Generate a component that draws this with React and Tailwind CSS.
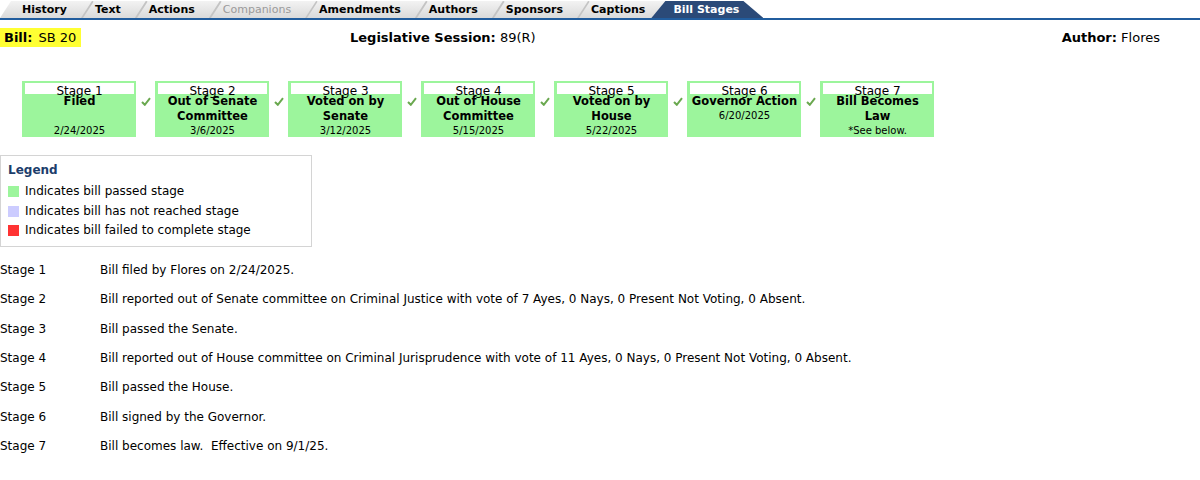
const tabs = [
    { label: "History" },
    { label: "Text" },
    { label: "Actions" },
    { label: "Companions", disabled: true },
    { label: "Amendments" },
    { label: "Authors" },
    { label: "Sponsors" },
    { label: "Captions" },
];

const stages = [
    { n: 1, title: ["Filed", "\u00a0"], date: "2/24/2025" },
    { n: 2, title: ["Out of Senate", "Committee"], date: "3/6/2025" },
    { n: 3, title: ["Voted on by", "Senate"], date: "3/12/2025" },
    { n: 4, title: ["Out of House", "Committee"], date: "5/15/2025" },
    { n: 5, title: ["Voted on by", "House"], date: "5/22/2025" },
    { n: 6, title: ["Governor Action"], date: "6/20/2025" },
    { n: 7, title: ["Bill Becomes", "Law"], date: "*See below." },
];

const details = [
    "Bill filed by Flores on 2/24/2025.",
    "Bill reported out of Senate committee on Criminal Justice with vote of 7 Ayes, 0 Nays, 0 Present Not Voting, 0 Absent.",
    "Bill passed the Senate.",
    "Bill reported out of House committee on Criminal Jurisprudence with vote of 11 Ayes, 0 Nays, 0 Present Not Voting, 0 Absent.",
    "Bill passed the House.",
    "Bill signed by the Governor.",
    "Bill becomes law.\u00a0\u00a0Effective on 9/1/25.",
];

function Check() {
    return (
        <svg width="10" height="9" viewBox="0 0 10 9" className="self-start mt-[16px] mx-auto">
            <path d="M1 5 L3.8 7.8 L9 1.2" fill="none" stroke="#6aa84f" strokeWidth="2" />
        </svg>
    );
}

function StageBox({ stage }) {
    return (
        <div className="w-[114px] h-[56px] shrink-0 bg-[#9cf59c] pt-[2px] pl-[3px] pr-[2px] text-center text-black">
            <div className="h-[11px] bg-white text-[12px] leading-[16px]">Stage {stage.n}</div>
            <div className="relative text-[11.5px] font-bold leading-[15px] whitespace-nowrap">
                {stage.title.map((t, i) => (
                    <div key={i}>{t}</div>
                ))}
            </div>
            <div className="text-[10px] leading-[13px]">{stage.date}</div>
        </div>
    );
}

export default function App() {
    return (
        <div className="w-[1200px] h-[480px] bg-white text-black font-['Verdana','DejaVu_Sans',sans-serif] overflow-hidden">
            {/* tab strip */}
            <div className="flex h-[20px] pt-[1px] border-b-2 border-[#215d9e]">
                {tabs.map((t, i) => (
                    <div
                        key={t.label}
                        className={
                            "relative h-[17px] pr-[25px] text-[11px] leading-[17px] bg-linear-to-b from-[#f3f3f3] to-[#dadada] [clip-path:polygon(11px_0,100%_0,100%_100%,0_100%)] " +
                            (i === 0 ? "pl-[22px] " : "pl-[14px] -ml-[11px] ") +
                            (t.disabled ? "text-[#9a9a9a]" : "font-bold text-black")
                        }
                    >
                        {i > 0 && (
                            <svg width="13" height="17" className="absolute left-0 top-0">
                                <path d="M0.5 17 L11.5 0" stroke="#c4c4c4" strokeWidth="2.5" />
                            </svg>
                        )}
                        {t.label}
                    </div>
                ))}
                <div className="relative h-[17px] -ml-[19px] pl-[22px] pr-[24px] text-[11px] leading-[17px] font-bold text-white bg-[#2b4a78] [clip-path:polygon(14px_0,calc(100%-20px)_0,100%_100%,0_100%)]">
                    Bill Stages
                </div>
            </div>

            {/* bill header */}
            <div className="mt-[8px] h-[19px] grid grid-cols-[350px_1fr_auto] items-center pr-[40px] text-[13px]">
                <div>
                    <span className="inline-block bg-[#ffff33] pl-[4px] pr-[5px] leading-[19px]">
                        <b>Bill:</b>
                        <span className="ml-[6px]">SB 20</span>
                    </span>
                </div>
                <div>
                    <b>Legislative Session:</b> 89(R)
                </div>
                <div>
                    <b>Author:</b> Flores
                </div>
            </div>

            {/* stage boxes */}
            <div className="mt-[34px] pl-[22px] flex">
                {stages.map((s, i) => (
                    <div key={s.n} className="flex">
                        {i > 0 && (
                            <div className="w-[19px] flex">
                                <Check />
                            </div>
                        )}
                        <StageBox stage={s} />
                    </div>
                ))}
            </div>

            {/* legend */}
            <div className="mt-[18px] w-[312px] border border-[#d4d4d4] pl-[7px] pt-[4px] pb-[5px] text-[12px]">
                <div className="font-bold text-[#1c3d6b] leading-[20px] mb-[2px]">Legend</div>
                <div className="flex items-center leading-[19.5px]">
                    <span className="w-[11px] h-[11px] bg-[#9cf59c] mr-[6px]" />
                    Indicates bill passed stage
                </div>
                <div className="flex items-center leading-[19.5px]">
                    <span className="w-[11px] h-[11px] bg-[#ccccff] mr-[6px]" />
                    Indicates bill has not reached stage
                </div>
                <div className="flex items-center leading-[19.5px]">
                    <span className="w-[11px] h-[11px] bg-[#ff3333] mr-[6px]" />
                    Indicates bill failed to complete stage
                </div>
            </div>

            {/* stage details */}
            <div className="mt-[9px] text-[12px]">
                {details.map((d, i) => (
                    <div key={i} className="flex items-center h-[29.33px]">
                        <div className="w-[100px] shrink-0">Stage {i + 1}</div>
                        <div>{d}</div>
                    </div>
                ))}
            </div>
        </div>
    );
}
